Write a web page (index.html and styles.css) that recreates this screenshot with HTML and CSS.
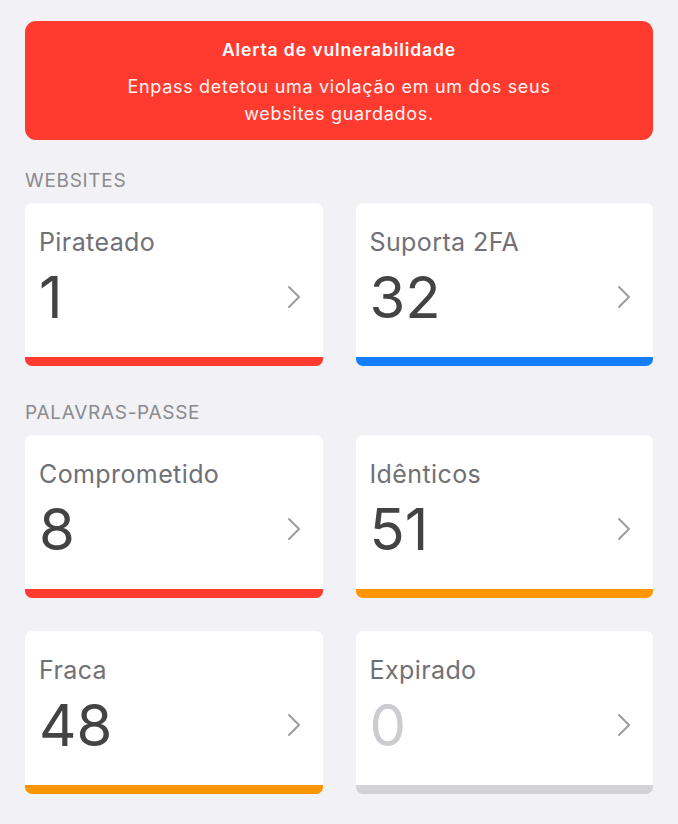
FILE: index.html
```html
<!DOCTYPE html>
<html lang="pt">
<head>
<meta charset="utf-8">
<link rel="stylesheet" href="styles.css">
</head>
<body>
<main class="page">
  <section class="alert">
    <div class="alert-title">Alerta de vulnerabilidade</div>
    <div class="alert-text">Enpass detetou uma violação em um dos seus<br>websites guardados.</div>
  </section>

  <div class="section-label first">WEBSITES</div>
  <div class="grid">
    <div class="card">
      <div class="card-body">
        <div class="card-label">Pirateado</div>
        <div class="card-row"><span class="card-num">1</span><svg class="chev" viewBox="0 0 14 24"><path d="M2 2 L12 12 L2 22"/></svg></div>
      </div>
      <div class="bar red"></div>
    </div>
    <div class="card">
      <div class="card-body">
        <div class="card-label">Suporta 2FA</div>
        <div class="card-row"><span class="card-num">32</span><svg class="chev" viewBox="0 0 14 24"><path d="M2 2 L12 12 L2 22"/></svg></div>
      </div>
      <div class="bar blue"></div>
    </div>
  </div>

  <div class="section-label">PALAVRAS-PASSE</div>
  <div class="grid">
    <div class="card">
      <div class="card-body">
        <div class="card-label">Comprometido</div>
        <div class="card-row"><span class="card-num">8</span><svg class="chev" viewBox="0 0 14 24"><path d="M2 2 L12 12 L2 22"/></svg></div>
      </div>
      <div class="bar red"></div>
    </div>
    <div class="card">
      <div class="card-body">
        <div class="card-label">Idênticos</div>
        <div class="card-row"><span class="card-num">51</span><svg class="chev" viewBox="0 0 14 24"><path d="M2 2 L12 12 L2 22"/></svg></div>
      </div>
      <div class="bar orange"></div>
    </div>
    <div class="card">
      <div class="card-body">
        <div class="card-label">Fraca</div>
        <div class="card-row"><span class="card-num">48</span><svg class="chev" viewBox="0 0 14 24"><path d="M2 2 L12 12 L2 22"/></svg></div>
      </div>
      <div class="bar orange"></div>
    </div>
    <div class="card">
      <div class="card-body">
        <div class="card-label">Expirado</div>
        <div class="card-row"><span class="card-num zero">0</span><svg class="chev" viewBox="0 0 14 24"><path d="M2 2 L12 12 L2 22"/></svg></div>
      </div>
      <div class="bar gray"></div>
    </div>
  </div>
</main>
</body>
</html>
```
FILE: styles.css
```css
html, body {
  margin: 0;
  padding: 0;
  background: #f1f1f6;
}
body {
  font-family: Inter, "Noto Sans", "Liberation Sans", sans-serif;
  -webkit-font-smoothing: antialiased;
}
.page {
  padding: 21px 25px 0 25px;
}
.alert {
  background: #ff3b30;
  border-radius: 11px;
  color: #fff;
  text-align: center;
  padding: 17px 20px 13px;
}
.alert-title {
  font-size: 17.5px;
  font-weight: 600;
  line-height: 24px;
  letter-spacing: 0.9px;
}
.alert-text {
  font-size: 18px;
  line-height: 27px;
  margin-top: 11px;
  color: #fff4f2;
  letter-spacing: 0.7px;
}
.section-label {
  font-size: 19px;
  line-height: 24px;
  color: #8a8a8f;
  margin: 35px 0 10px 0;
  letter-spacing: 0.7px;
}
.section-label.first {
  margin-top: 29px;
}
.grid {
  display: grid;
  grid-template-columns: 1fr 1fr;
  column-gap: 33px;
  row-gap: 33px;
}
.card {
  background: #fff;
  border-radius: 7px;
  height: 163px;
  overflow: hidden;
  display: flex;
  flex-direction: column;
}
.card-body {
  flex: 1;
  padding: 24px 22px 0 14px;
}
.card-label {
  font-size: 25px;
  line-height: 30px;
  color: #707075;
  letter-spacing: 0.4px;
}
.card-row {
  margin-top: 10px;
  display: flex;
  align-items: center;
  justify-content: space-between;
  height: 60px;
}
.card-num {
  font-size: 58px;
  line-height: 60px;
  color: #434345;
}
.card-num.zero {
  color: #cbcbd0;
}
.chev {
  width: 14px;
  height: 24px;
  fill: none;
  stroke: #9c9ca1;
  stroke-width: 2;
  stroke-linecap: round;
  stroke-linejoin: round;
}
.bar {
  height: 9px;
}
.bar.red { background: #ff3b30; }
.bar.blue { background: #147efb; }
.bar.orange { background: #ff9500; }
.bar.gray { background: #d1d1d6; }
```
